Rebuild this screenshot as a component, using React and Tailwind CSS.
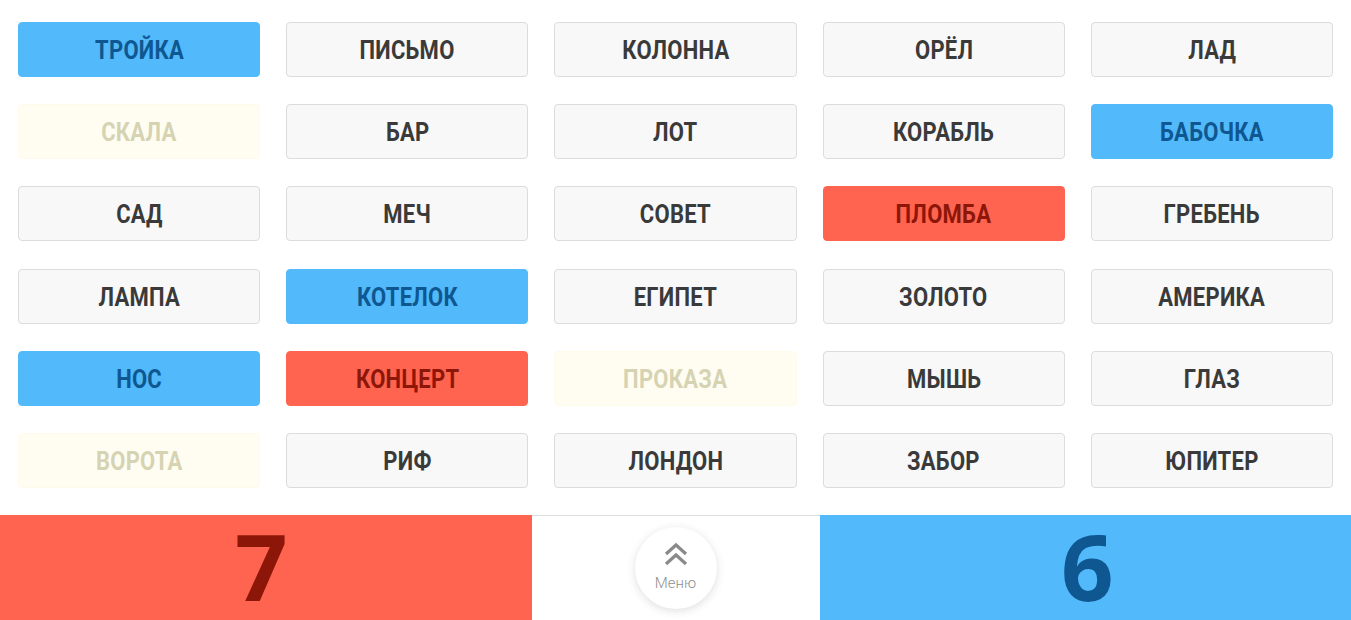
import React from "react";

const words = [
  ["ТРОЙКА", "b"], ["ПИСЬМО", "n"], ["КОЛОННА", "n"], ["ОРЁЛ", "n"], ["ЛАД", "n"],
  ["СКАЛА", "f"], ["БАР", "n"], ["ЛОТ", "n"], ["КОРАБЛЬ", "n"], ["БАБОЧКА", "b"],
  ["САД", "n"], ["МЕЧ", "n"], ["СОВЕТ", "n"], ["ПЛОМБА", "r"], ["ГРЕБЕНЬ", "n"],
  ["ЛАМПА", "n"], ["КОТЕЛОК", "b"], ["ЕГИПЕТ", "n"], ["ЗОЛОТО", "n"], ["АМЕРИКА", "n"],
  ["НОС", "b"], ["КОНЦЕРТ", "r"], ["ПРОКАЗА", "f"], ["МЫШЬ", "n"], ["ГЛАЗ", "n"],
  ["ВОРОТА", "f"], ["РИФ", "n"], ["ЛОНДОН", "n"], ["ЗАБОР", "n"], ["ЮПИТЕР", "n"],
];

const styles = {
  b: "bg-[#52b9fb] border-[#52b9fb] text-[#0e5790]",
  r: "bg-[#ff6450] border-[#ff6450] text-[#8c1608]",
  n: "bg-[#f8f8f8] border-[#dcdcdc] text-[#3a3a3a]",
  f: "bg-[#fffdf2] border-[#fffbeb] text-[#d6d3b3]",
};

export default function App() {
  return (
    <div className="w-[1351px] h-[620px] bg-white overflow-hidden flex flex-col">
      <div className="grid grid-cols-5 gap-x-[26px] gap-y-[27.2px] px-[18px] pt-[22px] h-[515px] content-start">
        {words.map(([w, t]) => (
          <div
            key={w}
            className={`h-[55px] rounded-[4px] border flex items-center justify-center pt-[3px] ${styles[t]}`}
          >
            <span
              className="text-[25px] leading-[30px] font-bold tracking-[0.3px] scale-x-[0.88] inline-block"
              style={{ fontFamily: "Roboto, 'Liberation Sans', sans-serif" }}
            >
              {w}
            </span>
          </div>
        ))}
      </div>
      <div className="flex h-[105px]">
        <div className="flex-1 bg-[#ff6450] flex items-center justify-center">
          <span
            className="text-[92px] leading-[100px] font-bold text-[#8c1608] pr-[9px] pb-[4px]"
            style={{ fontFamily: "'Open Sans', sans-serif" }}
          >
            7
          </span>
        </div>
        <div className="w-[288px] bg-white border-t border-[#dddddd] flex justify-center pt-[11px]">
          <div className="w-[82px] h-[82px] rounded-full bg-white shadow-[0_2px_10px_rgba(0,0,0,0.13)] flex flex-col items-center pt-[15px]">
            <svg width="26" height="24" viewBox="0 0 26 24" fill="none" stroke="#8a8a8a" strokeWidth="3.2" strokeLinecap="butt" strokeLinejoin="miter">
              <path d="M3 12 L13 3 L23 12" />
              <path d="M3 22 L13 13 L23 22" />
            </svg>
            <span
              className="text-[15px] font-light text-[#8f8f8f] mt-[7px] leading-[20px]"
              style={{ fontFamily: "Roboto, sans-serif" }}
            >
              Меню
            </span>
          </div>
        </div>
        <div className="flex-1 bg-[#52b9fb] flex items-center justify-center">
          <span
            className="text-[92px] leading-[100px] font-bold text-[#0e5790] pl-[4px] pb-[4px]"
            style={{ fontFamily: "'Open Sans', sans-serif" }}
          >
            6
          </span>
        </div>
      </div>
    </div>
  );
}
